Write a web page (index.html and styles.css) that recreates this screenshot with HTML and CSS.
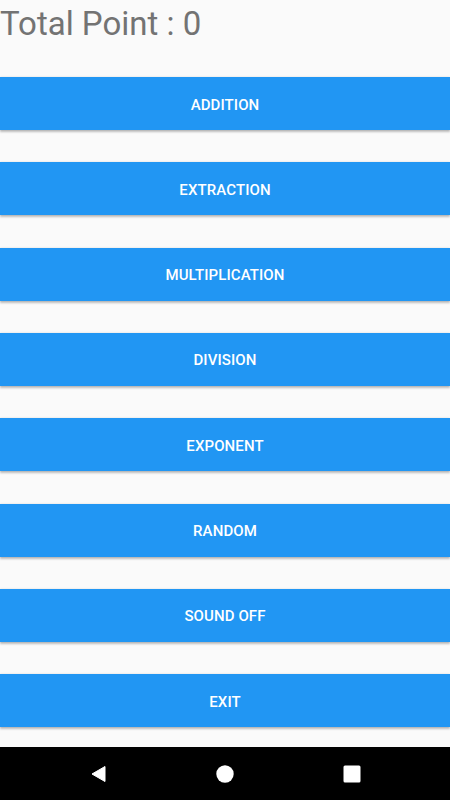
FILE: index.html
```html
<!DOCTYPE html>
<html>
<head>
<meta charset="utf-8">
<link rel="stylesheet" href="styles.css">
</head>
<body>
<div class="screen">
  <main class="content">
    <div class="title">Total Point : 0</div>
    <div class="buttons">
      <button class="btn">Addition</button>
      <button class="btn">Extraction</button>
      <button class="btn">Multiplication</button>
      <button class="btn">Division</button>
      <button class="btn">Exponent</button>
      <button class="btn">Random</button>
      <button class="btn">Sound off</button>
      <button class="btn">Exit</button>
    </div>
  </main>
  <nav class="navbar">
    <svg class="nav-icon" width="18" height="18" viewBox="0 0 18 18"><path d="M16 1.5 L16 16.5 L3 9 Z" fill="#fff" stroke="#fff" stroke-width="1" stroke-linejoin="round"/></svg>
    <svg class="nav-icon" width="18" height="18" viewBox="0 0 18 18"><circle cx="9" cy="9" r="8.7" fill="#fff"/></svg>
    <svg class="nav-icon" width="18" height="18" viewBox="0 0 18 18"><rect x="0.5" y="0.5" width="17" height="17" rx="1.5" fill="#fff"/></svg>
  </nav>
</div>
</body>
</html>
```
FILE: styles.css
```css
html, body {
  margin: 0;
  padding: 0;
}
body {
  background: #fafafa;
  font-family: Roboto, "Liberation Sans", sans-serif;
}
.screen {
  width: 450px;
  height: 800px;
  display: flex;
  flex-direction: column;
  overflow: hidden;
}
.content {
  flex: 1;
}
.title {
  font-size: 33px;
  line-height: 48px;
  color: #737373;
}
.buttons {
  margin-top: 29px;
  display: flex;
  flex-direction: column;
  gap: 32.33px;
}
.btn {
  display: block;
  width: 450px;
  height: 53px;
  margin: 0;
  border: none;
  background: #2196f3;
  color: #fff;
  font-family: Roboto, "Liberation Sans", sans-serif;
  font-weight: 500;
  font-size: 15px;
  text-transform: uppercase;
  letter-spacing: 0.1px;
  box-shadow: 0 2px 2px rgba(0, 0, 0, 0.24), 0 0 2px rgba(0, 0, 0, 0.12);
  padding: 2px 0 0 0;
}
.navbar {
  height: 53px;
  background: #000;
  display: flex;
  align-items: center;
  justify-content: space-between;
  padding: 0 89px 0 89px;
}
.nav-icon {
  display: block;
}
```
